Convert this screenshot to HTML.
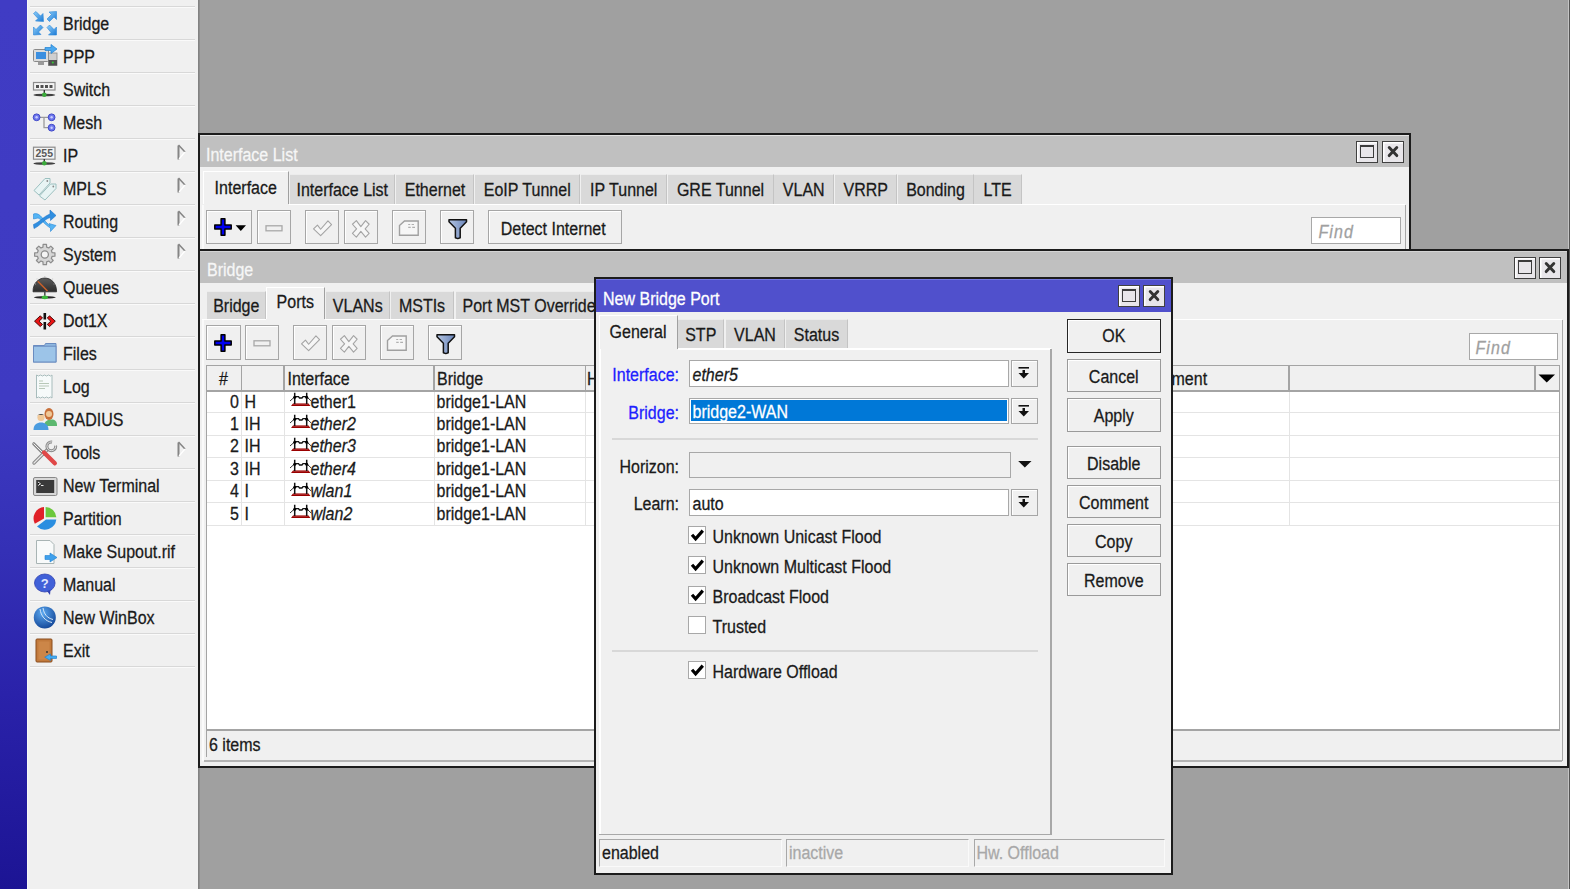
<!DOCTYPE html>
<html><head><meta charset="utf-8"><style>
*{box-sizing:border-box}
html,body{margin:0;padding:0}
body{width:1570px;height:889px;overflow:hidden;position:relative;background:#a0a0a0;font-family:"Liberation Sans",sans-serif;font-size:16px;color:#1a1a1a}
.a{position:absolute}
.t{position:absolute;white-space:nowrap;line-height:20px;height:20px;-webkit-text-stroke:0.25px currentColor;transform:scaleY(1.1);transform-origin:50% 42.5%}
#bar{left:0;top:0;width:27px;height:889px;background:linear-gradient(#403cc4,#3e3ac2 45%,#3430b6 62%,#2a22aa 78%,#1c1494)}
#menu{left:27px;top:0;width:171px;height:889px;background:#f0f0f0;border-left:1px solid #f8f8f8}
.sep{position:absolute;left:2px;width:165px;height:2px;border-top:1px solid #d8d8d8;border-bottom:1px solid #fafafa}
.win{position:absolute;background:#f0f0f0;border:2px solid #1c1c1c}
.ttext{color:#f6f6f6}
.btn{position:absolute;background:#f0f0f0;border:1.5px solid #a6a6a6;box-shadow:inset 1px 1px 0 #fff}
.wbtn{position:absolute;width:22px;height:22px;background:#e8e6ea;border:1.3px solid #404040;box-shadow:inset 1.5px 1.5px 0 #fff}

</style></head><body>
<div id="bar" class="a"></div>
<div id="menu" class="a">
<div class="sep" style="top:6px"></div>
<svg class="a" style="left:2px;top:6px" width="32" height="33" viewBox="0 0 32 33"><defs><linearGradient id="gb" x1="0" y1="0" x2="1" y2="1"><stop offset="0" stop-color="#8fd0fa"/><stop offset="1" stop-color="#1c7ad6"/></linearGradient></defs>
<g fill="url(#gb)" stroke="#2a86d8" stroke-width=".6">
<path d="M3.5 7.5 L6 5.5 L10.5 10 L13 7.5 L13.5 15.5 L5.5 15 L8 12.5 Z"/>
<path d="M26.5 5.5 L26.5 13.5 L24 11 L19.5 15.5 L17 13 L21.5 8.5 L19 6 Z"/>
<path d="M3.5 29 L3.5 21 L6 23.5 L10.5 19 L13 21.5 L8.5 26 L11 28.5 Z"/>
<path d="M17 21.5 L19.5 19 L24 23.5 L26.5 21 L26.5 29 L18.5 29 L21 26.5 Z"/>
</g></svg>
<div class="t mt" style="left:35px;top:14px">Bridge</div>
<div class="sep" style="top:39px"></div>
<svg class="a" style="left:2px;top:39px" width="32" height="33" viewBox="0 0 32 33"><rect x="3.5" y="10.5" width="15" height="12" rx="1" fill="#dcdcdc" stroke="#8a8a8a"/>
<rect x="6" y="13" width="10" height="7" fill="#3b8fe0"/>
<rect x="8" y="22.5" width="6" height="3.5" fill="#9a9a9a"/>
<rect x="18.5" y="14" width="8.5" height="12.5" fill="#cfcfcf" stroke="#8a8a8a" stroke-width=".8"/>
<rect x="18.5" y="21" width="8.5" height="5.5" fill="#505050"/>
<circle cx="22.8" cy="23.5" r="1" fill="#3c3"/>
<path d="M15 8.5 L21 8.5 L21 5.5 L27 10 L21 14.5 L21 11.5 L15 11.5 Z" fill="#4aa8f0" stroke="#1f7fd0" stroke-width=".7"/></svg>
<div class="t mt" style="left:35px;top:47px">PPP</div>
<div class="sep" style="top:72px"></div>
<svg class="a" style="left:2px;top:72px" width="32" height="33" viewBox="0 0 32 33"><rect x="3.5" y="10.5" width="21.5" height="7.5" fill="#f4f4f4" stroke="#8c8c8c" stroke-width="1.2"/>
<g fill="#505050"><rect x="6" y="13" width="3" height="3"/><rect x="10.5" y="13" width="3" height="3"/><rect x="15" y="13" width="3" height="3"/><rect x="19.5" y="13" width="3" height="3"/></g>
<rect x="13.6" y="18" width="1.4" height="4" fill="#333"/>
<ellipse cx="14.3" cy="23" rx="11" ry="1.3" fill="#404040"/>
<circle cx="14.3" cy="22.8" r="2.3" fill="#3aaa3a"/></svg>
<div class="t mt" style="left:35px;top:80px">Switch</div>
<div class="sep" style="top:105px"></div>
<svg class="a" style="left:2px;top:105px" width="32" height="33" viewBox="0 0 32 33"><path d="M6.5 12.3 H21.5 M14 12.3 V22.7 H21.5" stroke="#9a9a9a" stroke-width="1.3" fill="none"/>
<g fill="#6e78ec" stroke="#4048c8" stroke-width="1"><circle cx="6.6" cy="12.3" r="3.4"/><circle cx="21.6" cy="12.3" r="3.4"/><circle cx="21.6" cy="22.7" r="3.4"/></g>
<g fill="#c8ccff"><circle cx="6.6" cy="12.3" r="1.2"/><circle cx="21.6" cy="12.3" r="1.2"/><circle cx="21.6" cy="22.7" r="1.2"/></g></svg>
<div class="t mt" style="left:35px;top:113px">Mesh</div>
<div class="sep" style="top:138px"></div>
<svg class="a" style="left:2px;top:138px" width="32" height="33" viewBox="0 0 32 33"><rect x="3.5" y="9.2" width="21.5" height="12" fill="#f4f4f4" stroke="#8c8c8c" stroke-width="1.2"/>
<text x="14.3" y="19.3" font-family="Liberation Sans" font-size="10.5" font-weight="bold" fill="#5a5a5a" text-anchor="middle">255</text>
<rect x="13.6" y="21" width="1.4" height="3.5" fill="#333"/>
<ellipse cx="14.3" cy="25.5" rx="11" ry="1.3" fill="#404040"/>
<circle cx="14.3" cy="25.3" r="2.3" fill="#3aaa3a"/></svg>
<div class="t mt" style="left:35px;top:146px">IP</div>
<svg class="a" style="left:143px;top:138px" width="16" height="33" viewBox="0 0 16 33"><path d="M7.5 7.5 V21.5" stroke="#858585" stroke-width="2"/><path d="M7.5 7 L14 14" stroke="#858585" stroke-width="1.5"/><path d="M14 14 L8 21" stroke="#ffffff" stroke-width="1.2"/></svg>
<div class="sep" style="top:171px"></div>
<svg class="a" style="left:2px;top:171px" width="32" height="33" viewBox="0 0 32 33"><g fill="#e8f4f4" stroke="#9cc0c0" stroke-width="1">
<path d="M4 19.5 L15 7.5 L20 7.5 L20 12 L9 24 Z"/>
<path d="M9.5 25 L20.5 13 L26 13 L26 17.5 L15 29 Z"/></g>
<circle cx="17.3" cy="10" r=".9" fill="#888"/><circle cx="23.3" cy="15.5" r=".9" fill="#888"/></svg>
<div class="t mt" style="left:35px;top:179px">MPLS</div>
<svg class="a" style="left:143px;top:171px" width="16" height="33" viewBox="0 0 16 33"><path d="M7.5 7.5 V21.5" stroke="#858585" stroke-width="2"/><path d="M7.5 7 L14 14" stroke="#858585" stroke-width="1.5"/><path d="M14 14 L8 21" stroke="#ffffff" stroke-width="1.2"/></svg>
<div class="sep" style="top:204px"></div>
<svg class="a" style="left:2px;top:204px" width="32" height="33" viewBox="0 0 32 33"><path d="M3.5 10 C9 8 12 14 16 18 L20 22 L19 19.5 L26 21.5 L20.5 27.5 L20.5 24 C15 21 11 15 8 14 L3.5 15 Z" fill="#55b4f4" stroke="#2a88d8" stroke-width=".6"/>
<path d="M3.5 20.5 C10 18 14 12 20 10 L20 6 L26 11.5 L20.5 16.5 L20.5 13.5 C14 15 10 22 4 24.5 Z" fill="#2f8ee0" stroke="#1f74c8" stroke-width=".6"/></svg>
<div class="t mt" style="left:35px;top:212px">Routing</div>
<svg class="a" style="left:143px;top:204px" width="16" height="33" viewBox="0 0 16 33"><path d="M7.5 7.5 V21.5" stroke="#858585" stroke-width="2"/><path d="M7.5 7 L14 14" stroke="#858585" stroke-width="1.5"/><path d="M14 14 L8 21" stroke="#ffffff" stroke-width="1.2"/></svg>
<div class="sep" style="top:237px"></div>
<svg class="a" style="left:2px;top:237px" width="32" height="33" viewBox="0 0 32 33"><path d="M13.11 7.34 L16.49 7.34 L16.64 10.13 L18.71 10.98 L20.79 9.12 L23.18 11.51 L21.32 13.59 L22.17 15.66 L24.96 15.81 L24.96 19.19 L22.17 19.34 L21.32 21.41 L23.18 23.49 L20.79 25.88 L18.71 24.02 L16.64 24.87 L16.49 27.66 L13.11 27.66 L12.96 24.87 L10.89 24.02 L8.81 25.88 L6.42 23.49 L8.28 21.41 L7.43 19.34 L4.64 19.19 L4.64 15.81 L7.43 15.66 L8.28 13.59 L6.42 11.51 L8.81 9.12 L10.89 10.98 L12.96 10.13 Z" fill="#d6d6d6" stroke="#8c8c8c" stroke-width="1.2" stroke-linejoin="round"/>
<circle cx="14.8" cy="17.5" r="3.6" fill="#f4f4f4" stroke="#8c8c8c" stroke-width="1.3"/></svg>
<div class="t mt" style="left:35px;top:245px">System</div>
<svg class="a" style="left:143px;top:237px" width="16" height="33" viewBox="0 0 16 33"><path d="M7.5 7.5 V21.5" stroke="#858585" stroke-width="2"/><path d="M7.5 7 L14 14" stroke="#858585" stroke-width="1.5"/><path d="M14 14 L8 21" stroke="#ffffff" stroke-width="1.2"/></svg>
<div class="sep" style="top:270px"></div>
<svg class="a" style="left:2px;top:270px" width="32" height="33" viewBox="0 0 32 33"><defs><linearGradient id="gq" x1="0" y1="0" x2="0" y2="1"><stop offset="0" stop-color="#5c5c5c"/><stop offset="1" stop-color="#2e2e2e"/></linearGradient></defs>
<path d="M3 21.8 C3 3.5, 26.6 3.5, 26.6 21.8 Z" fill="url(#gq)" stroke="#2a2a2a" stroke-width=".8"/>
<path d="M7 8.5 V9.5 M14.8 6 V7 M22.6 8.5 V9.5 M5 14 H6 M23.6 14 H24.6" stroke="#bbb" stroke-width=".8"/>
<path d="M7.8 11.2 L17.5 21" stroke="#c8602a" stroke-width="1.5"/>
<rect x="14" y="21.8" width="1.6" height="4" fill="#555"/>
<ellipse cx="14.8" cy="27.3" rx="11" ry="1.2" fill="#2a2a2a"/>
<ellipse cx="14.8" cy="27.3" rx="3.2" ry="1.9" fill="#3ab83a"/></svg>
<div class="t mt" style="left:35px;top:278px">Queues</div>
<div class="sep" style="top:303px"></div>
<svg class="a" style="left:2px;top:303px" width="32" height="33" viewBox="0 0 32 33"><path d="M14.8 10 V16.5 M14.8 19 V26.5" stroke="#111" stroke-width="2.6"/>
<path d="M4.5 18.2 L10.3 12.8 L12.5 15 L9 18.2 L12.5 21.4 L10.3 23.6 Z" fill="#e81414" stroke="#3a0000" stroke-width=".9" stroke-linejoin="round"/>
<path d="M25.3 18.2 L19.5 12.8 L17.3 15 L20.8 18.2 L17.3 21.4 L19.5 23.6 Z" fill="#e81414" stroke="#3a0000" stroke-width=".9" stroke-linejoin="round"/></svg>
<div class="t mt" style="left:35px;top:311px">Dot1X</div>
<div class="sep" style="top:336px"></div>
<svg class="a" style="left:2px;top:336px" width="32" height="33" viewBox="0 0 32 33"><path d="M3.5 9.5 H14.5 L15.5 7.5 H26 V26 H3.5 Z" fill="#8fb8e0" stroke="#6a8cc0" stroke-width="1"/>
<rect x="3.5" y="10.2" width="22.5" height="15.8" fill="#9cc4e8" stroke="#6a8cc0" stroke-width="1"/></svg>
<div class="t mt" style="left:35px;top:344px">Files</div>
<div class="sep" style="top:369px"></div>
<svg class="a" style="left:2px;top:369px" width="32" height="33" viewBox="0 0 32 33"><path d="M6.5 6 L8.5 7 L10.5 6 L12.5 7 L14.5 6 L16.5 7 L18.5 6 L20.5 7 L22 6 V29 L20.5 28 L18.5 29 L16.5 28 L14.5 29 L12.5 28 L10.5 29 L8.5 28 L6.5 29 Z" fill="#f6fafa" stroke="#a8bcbc" stroke-width="1"/>
<path d="M9 12 H13 M9 14.5 H19 M9 17 H19 M9 19.5 H15" stroke="#b8c8b8" stroke-width="1"/></svg>
<div class="t mt" style="left:35px;top:377px">Log</div>
<div class="sep" style="top:402px"></div>
<svg class="a" style="left:2px;top:402px" width="32" height="33" viewBox="0 0 32 33"><path d="M14 24 C14 19 18 17.5 21.5 17.5 C25 17.5 27 19.5 27 23 L27 24 Z" fill="#5cb870"/>
<ellipse cx="19" cy="12" rx="4.5" ry="6" fill="#c8703a"/>
<circle cx="19" cy="12" r="3" fill="#f0c898"/>
<path d="M3.5 28 C3.5 22.5 7 20.5 11 20.5 C15 20.5 18.5 22.5 18.5 28 Z" fill="#4a9ce0"/>
<circle cx="11" cy="15.5" r="3.6" fill="#f0c898"/>
<path d="M7.2 14.5 C7.2 11 14.8 11 14.8 14.5 L14 13 L8 13 Z" fill="#4a4a4a"/></svg>
<div class="t mt" style="left:35px;top:410px">RADIUS</div>
<div class="sep" style="top:435px"></div>
<svg class="a" style="left:2px;top:435px" width="32" height="33" viewBox="0 0 32 33"><path d="M3.8 8.8 L14 19" stroke="#8a8a8a" stroke-width="3.2" stroke-linecap="round"/><path d="M3.8 8.8 L14 19" stroke="#f0f0f0" stroke-width="1" stroke-linecap="round"/>
<path d="M4 28 L17.5 14.5" stroke="#8a8a8a" stroke-width="3.4" stroke-linecap="round"/><path d="M4 28 L17.5 14.5" stroke="#e8e8e8" stroke-width="1.2" stroke-linecap="round"/>
<circle cx="21.3" cy="11.3" r="4.4" fill="none" stroke="#8a8a8a" stroke-width="3"/><circle cx="21.3" cy="11.3" r="4.4" fill="none" stroke="#e0e0e0" stroke-width="1"/><path d="M21.5 11 L22.5 4.5 L30 4.5 L30 10 Z" fill="#f0f0f0"/>
<path d="M14 17.5 L24.8 28.3" stroke="#e04848" stroke-width="4.4" stroke-linecap="round"/></svg>
<div class="t mt" style="left:35px;top:443px">Tools</div>
<svg class="a" style="left:143px;top:435px" width="16" height="33" viewBox="0 0 16 33"><path d="M7.5 7.5 V21.5" stroke="#858585" stroke-width="2"/><path d="M7.5 7 L14 14" stroke="#858585" stroke-width="1.5"/><path d="M14 14 L8 21" stroke="#ffffff" stroke-width="1.2"/></svg>
<div class="sep" style="top:468px"></div>
<svg class="a" style="left:2px;top:468px" width="32" height="33" viewBox="0 0 32 33"><rect x="3.5" y="9.5" width="23.5" height="18" rx="1.5" fill="#d8d8d8" stroke="#888" stroke-width="1"/>
<rect x="6.2" y="12" width="18" height="13" fill="#3a3a3a"/>
<path d="M8 14 L10.5 15.8 L8 17.5 M11 17.5 H13.5" stroke="#eee" stroke-width="1"/></svg>
<div class="t mt" style="left:35px;top:476px">New Terminal</div>
<div class="sep" style="top:501px"></div>
<svg class="a" style="left:2px;top:501px" width="32" height="33" viewBox="0 0 32 33"><path d="M14 17.5 L14 6 A11.5 11.5 0 0 0 4.8 22.7 Z" fill="#e02028"/>
<path d="M15.6 16.3 L15.6 6 A11 11 0 0 1 26.3 16.3 Z" fill="#6cc83c"/>
<path d="M26.3 18.5 A11.5 11.5 0 0 1 7 25.6 L16 18.5 Z" fill="#2a8ee0"/></svg>
<div class="t mt" style="left:35px;top:509px">Partition</div>
<div class="sep" style="top:534px"></div>
<svg class="a" style="left:2px;top:534px" width="32" height="33" viewBox="0 0 32 33"><path d="M6.5 6.5 H20 L24 10.5 V29.5 H6.5 Z" fill="#f8fafa" stroke="#a8b4b4" stroke-width="1"/>
<path d="M15 21.5 H20 V19 L27 23.5 L20 28 V25.5 H15 Z" fill="#3ea0ec" stroke="#1f7fd0" stroke-width=".6"/></svg>
<div class="t mt" style="left:35px;top:542px">Make Supout.rif</div>
<div class="sep" style="top:567px"></div>
<svg class="a" style="left:2px;top:567px" width="32" height="33" viewBox="0 0 32 33"><ellipse cx="14.8" cy="16" rx="10.3" ry="9" fill="#4060d8" stroke="#3040b0" stroke-width=".8"/>
<path d="M17 24 L20 28 L20.5 23 Z" fill="#3040b0"/>
<text x="14.8" y="21" font-family="Liberation Sans" font-size="13" font-weight="bold" fill="#e0e8ff" text-anchor="middle">?</text></svg>
<div class="t mt" style="left:35px;top:575px">Manual</div>
<div class="sep" style="top:600px"></div>
<svg class="a" style="left:2px;top:600px" width="32" height="33" viewBox="0 0 32 33"><defs><radialGradient id="gw" cx=".4" cy=".3" r=".8"><stop offset="0" stop-color="#5aa8f0"/><stop offset="1" stop-color="#0e3e90"/></radialGradient></defs>
<circle cx="14.8" cy="17.4" r="11" fill="url(#gw)"/>
<path d="M10 9 C11 16 15 21 22 22.5 M13 8 C14 14 17 18 23 19.5" stroke="#d8e8f8" stroke-width="1" fill="none"/></svg>
<div class="t mt" style="left:35px;top:608px">New WinBox</div>
<div class="sep" style="top:633px"></div>
<svg class="a" style="left:2px;top:633px" width="32" height="33" viewBox="0 0 32 33"><rect x="6" y="6" width="16" height="23" rx="1" fill="#c27a3c" stroke="#8a4c1c" stroke-width="1"/>
<rect x="8.5" y="8.5" width="11" height="18" fill="#cc8648"/>
<circle cx="17" cy="19" r="1" fill="#333"/>
<path d="M26.5 23 H20.5 V21 L14.7 24.2 L20.5 27.4 V25.4 H26.5 Z" fill="#48aef0" stroke="#1f7fd0" stroke-width=".7"/></svg>
<div class="t mt" style="left:35px;top:641px">Exit</div>
<div class="sep" style="top:666px"></div>
</div>
<div class="a" style="left:198px;top:0px;width:2px;height:889px;background:linear-gradient(90deg,#7c7c7c,#949494)"></div>
<div class="a" style="left:1568px;top:0px;width:1px;height:889px;background:#c4c4c4"></div>
<div class="a" style="left:1569px;top:0px;width:1px;height:889px;background:#555"></div>
<div class="win" style="left:198px;top:133px;width:1213px;height:118px"></div>
<div class="a" style="left:200px;top:135px;width:1209px;height:1px;background:#e4e4e4"></div>
<div class="a" style="left:200px;top:136px;width:1209px;height:31px;background:#c0c0c0"></div>
<div class="t ttext" style="left:206px;top:145px;">Interface List</div>
<div class="wbtn" style="left:1356px;top:141px"><div class="a" style="left:3px;top:2.8px;width:13.5px;height:13.5px;border:1.4px solid #3c3c3c;border-top-width:2.8px;background:#e8e6ea"></div></div>
<div class="wbtn" style="left:1382px;top:141px"><svg class="a" style="left:0;top:0" width="20" height="20" viewBox="0 0 20 20"><path d="M6.2 5.6 L13.8 13.6 M13.8 5.6 L6.2 13.6" stroke="#333" stroke-width="2.9" stroke-linecap="round"/></svg></div>
<div class="a" style="left:202.5px;top:170.5px;width:86.5px;height:33.5px;background:#f0f0f0;border-top:1.5px solid #fff;border-left:1.5px solid #fff;border-right:1.5px solid #a0a0a0"></div>
<div class="t " style="left:202.5px;width:86.5px;top:177.5px;text-align:center;">Interface</div>
<div class="a" style="left:289.5px;top:173.5px;width:105.5px;height:30.0px;background:#d9d9d9;border-top:1px solid #ececec;border-right:1px solid #c4c4c4"></div>
<div class="t " style="left:289.5px;width:105.5px;top:180px;text-align:center;">Interface List</div>
<div class="a" style="left:396px;top:173.5px;width:78px;height:30.0px;background:#d9d9d9;border-top:1px solid #ececec;border-right:1px solid #c4c4c4"></div>
<div class="t " style="left:396px;width:78px;top:180px;text-align:center;">Ethernet</div>
<div class="a" style="left:474.5px;top:173.5px;width:105.5px;height:30.0px;background:#d9d9d9;border-top:1px solid #ececec;border-right:1px solid #c4c4c4"></div>
<div class="t " style="left:474.5px;width:105.5px;top:180px;text-align:center;">EoIP Tunnel</div>
<div class="a" style="left:580.5px;top:173.5px;width:86.5px;height:30.0px;background:#d9d9d9;border-top:1px solid #ececec;border-right:1px solid #c4c4c4"></div>
<div class="t " style="left:580.5px;width:86.5px;top:180px;text-align:center;">IP Tunnel</div>
<div class="a" style="left:667.5px;top:173.5px;width:106.0px;height:30.0px;background:#d9d9d9;border-top:1px solid #ececec;border-right:1px solid #c4c4c4"></div>
<div class="t " style="left:667.5px;width:106.0px;top:180px;text-align:center;">GRE Tunnel</div>
<div class="a" style="left:773.5px;top:173.5px;width:60.5px;height:30.0px;background:#d9d9d9;border-top:1px solid #ececec;border-right:1px solid #c4c4c4"></div>
<div class="t " style="left:773.5px;width:60.5px;top:180px;text-align:center;">VLAN</div>
<div class="a" style="left:834.5px;top:173.5px;width:62.5px;height:30.0px;background:#d9d9d9;border-top:1px solid #ececec;border-right:1px solid #c4c4c4"></div>
<div class="t " style="left:834.5px;width:62.5px;top:180px;text-align:center;">VRRP</div>
<div class="a" style="left:897.5px;top:173.5px;width:76.0px;height:30.0px;background:#d9d9d9;border-top:1px solid #ececec;border-right:1px solid #c4c4c4"></div>
<div class="t " style="left:897.5px;width:76.0px;top:180px;text-align:center;">Bonding</div>
<div class="a" style="left:973.5px;top:173.5px;width:48.0px;height:30.0px;background:#d9d9d9;border-top:1px solid #ececec;border-right:1px solid #c4c4c4"></div>
<div class="t " style="left:973.5px;width:48.0px;top:180px;text-align:center;">LTE</div>
<div class="a" style="left:289px;top:203.5px;width:1116px;height:1.5px;background:#fff"></div>
<div class="a" style="left:1404.5px;top:205px;width:1.0px;height:44px;background:#a8a8a8"></div>
<div class="a" style="left:202px;top:205px;width:1.5px;height:44px;background:#fafafa"></div>
<div class="btn" style="left:206px;top:210px;width:46px;height:34px;"></div>
<div class="btn" style="left:256.5px;top:210px;width:34.5px;height:34px;"></div>
<div class="btn" style="left:304.5px;top:210px;width:34.5px;height:34px;"></div>
<div class="btn" style="left:343.5px;top:210px;width:34.5px;height:34px;"></div>
<div class="btn" style="left:391.5px;top:210px;width:34.5px;height:34px;"></div>
<div class="btn" style="left:439.5px;top:210px;width:34.5px;height:34px;"></div>
<svg class="a" style="left:205.8px;top:210.39999999999998px" width="34" height="34" viewBox="0 0 34 34"><path d="M15.1 8.8 H18.9 V15.1 H25.2 V18.9 H18.9 V25.2 H15.1 V18.9 H8.8 V15.1 H15.1 Z" fill="#0000f0" stroke="#000" stroke-width="1.5" stroke-linejoin="round"/></svg>
<svg class="a" style="left:232px;top:210.7px" width="16" height="34" viewBox="0 0 16 34"><path d="M3.6 14.2 H14 L8.8 20 Z" fill="#000"/></svg>
<svg class="a" style="left:256.75px;top:210.7px" width="34" height="34" viewBox="0 0 34 34"><rect x="9" y="14.8" width="16" height="5" fill="none" stroke="#a8a8a8" stroke-width="1.3"/></svg>
<svg class="a" style="left:304.75px;top:210.7px" width="34" height="34" viewBox="0 0 34 34"><path d="M8.55 17.95 L12.45 14.05 L15.65 18.25 L22.95 9.85 L26.55 13.55 L15.65 24.55 Z" fill="#f6f6f6" stroke="#a4a4a4" stroke-width="1.1" stroke-linejoin="round"/></svg>
<svg class="a" style="left:343.75px;top:210.7px" width="34" height="34" viewBox="0 0 34 34"><path d="M8.45 13.25 L12.35 9.65 L16.85 15.65 L21.55 9.65 L25.15 13.25 L21.15 17.95 L25.15 22.45 L21.55 26.05 L16.85 20.35 L12.35 26.05 L8.45 22.45 L12.6 17.95 Z" fill="#f6f6f6" stroke="#a4a4a4" stroke-width="1.1" stroke-linejoin="round"/></svg>
<svg class="a" style="left:391.75px;top:210.7px" width="34" height="34" viewBox="0 0 34 34"><path d="M7.5 14.5 L12.5 10 H26.2 V24.3 H7.5 Z" fill="#f6f6f6" stroke="#a0a0a0" stroke-width="1.4"/><path d="M16.2 13.5 H18.2 M19.6 13.5 H22 M16.2 16.4 H18.7 M20.2 16.4 H23" stroke="#b0b0b0" stroke-width="1.1"/></svg>
<svg class="a" style="left:439.75px;top:210.7px" width="34" height="34" viewBox="0 0 34 34"><defs><linearGradient id="fg439" x1="0" x2="1"><stop offset="0" stop-color="#b4c4e0"/><stop offset="1" stop-color="#6a86bc"/></linearGradient></defs><path d="M9 8.8 H26.5 V10.8 L20.2 17.2 V26.8 L17.8 27.6 L15.4 26.8 V17.2 L9 10.8 Z" fill="url(#fg439)" stroke="#111" stroke-width="1.5" stroke-linejoin="round"/></svg>
<div class="btn" style="left:487.5px;top:210px;width:134.5px;height:34px;"></div>
<div class="t " style="left:486px;width:134.5px;top:218.5px;text-align:center;">Detect Internet</div>
<div class="a" style="left:1311px;top:217px;width:90px;height:27px;background:#fff;border:1.5px solid #a8a8a8"></div>
<div class="t " style="left:1318.5px;top:221.5px;font-style:italic;color:#a0a0a0;letter-spacing:1.1px">Find</div>
<div class="win" style="left:198px;top:249px;width:1371px;height:519px"></div>
<div class="a" style="left:200px;top:251px;width:1367px;height:1px;background:#d4d4d4"></div>
<div class="a" style="left:200px;top:252px;width:1367px;height:31px;background:#c0c0c0"></div>
<div class="t ttext" style="left:207px;top:259.5px;">Bridge</div>
<div class="wbtn" style="left:1514px;top:256.5px"><div class="a" style="left:3px;top:2.8px;width:13.5px;height:13.5px;border:1.4px solid #3c3c3c;border-top-width:2.8px;background:#e8e6ea"></div></div>
<div class="wbtn" style="left:1539px;top:256.5px"><svg class="a" style="left:0;top:0" width="20" height="20" viewBox="0 0 20 20"><path d="M6.2 5.6 L13.8 13.6 M13.8 5.6 L6.2 13.6" stroke="#333" stroke-width="2.9" stroke-linecap="round"/></svg></div>
<div class="a" style="left:207px;top:290.5px;width:58.5px;height:28.0px;background:#d9d9d9;border-top:1px solid #ececec;border-right:1px solid #c4c4c4"></div>
<div class="t " style="left:207px;width:58.5px;top:296px;text-align:center;">Bridge</div>
<div class="a" style="left:265.5px;top:286.5px;width:59.5px;height:32.5px;background:#f0f0f0;border-top:1.5px solid #fff;border-left:1.5px solid #fff;border-right:1.5px solid #a0a0a0"></div>
<div class="t " style="left:265.5px;width:59.5px;top:292px;text-align:center;">Ports</div>
<div class="a" style="left:325.5px;top:290.5px;width:64.5px;height:28.0px;background:#d9d9d9;border-top:1px solid #ececec;border-right:1px solid #c4c4c4"></div>
<div class="t " style="left:325.5px;width:64.5px;top:296px;text-align:center;">VLANs</div>
<div class="a" style="left:390.5px;top:290.5px;width:63.0px;height:28.0px;background:#d9d9d9;border-top:1px solid #ececec;border-right:1px solid #c4c4c4"></div>
<div class="t " style="left:390.5px;width:63.0px;top:296px;text-align:center;">MSTIs</div>
<div class="a" style="left:455.5px;top:290.5px;width:160px;height:28px;background:#d9d9d9;border-top:1px solid #ececec"></div>
<div class="t " style="left:462.5px;top:296px;">Port MST Overrides</div>
<div class="a" style="left:325px;top:318.5px;width:1237px;height:1.5px;background:#fff"></div>
<div class="a" style="left:202px;top:319px;width:63.5px;height:1px;background:#fff"></div>
<div class="a" style="left:1561.5px;top:320px;width:1.0px;height:441px;background:#a8a8a8"></div>
<div class="a" style="left:202px;top:320px;width:1.5px;height:441px;background:#fafafa"></div>
<div class="btn" style="left:206px;top:325px;width:34.5px;height:34.5px;"></div>
<div class="btn" style="left:244.5px;top:325px;width:34.5px;height:34.5px;"></div>
<div class="btn" style="left:292.5px;top:325px;width:34.5px;height:34.5px;"></div>
<div class="btn" style="left:331.5px;top:325px;width:34.5px;height:34.5px;"></div>
<div class="btn" style="left:379.5px;top:325px;width:34.5px;height:34.5px;"></div>
<div class="btn" style="left:427.5px;top:325px;width:34.5px;height:34.5px;"></div>
<svg class="a" style="left:206.25px;top:325.95px" width="34" height="34" viewBox="0 0 34 34"><path d="M15.1 8.8 H18.9 V15.1 H25.2 V18.9 H18.9 V25.2 H15.1 V18.9 H8.8 V15.1 H15.1 Z" fill="#0000f0" stroke="#000" stroke-width="1.5" stroke-linejoin="round"/></svg>
<svg class="a" style="left:244.75px;top:325.95px" width="34" height="34" viewBox="0 0 34 34"><rect x="9" y="14.8" width="16" height="5" fill="none" stroke="#a8a8a8" stroke-width="1.3"/></svg>
<svg class="a" style="left:292.75px;top:325.95px" width="34" height="34" viewBox="0 0 34 34"><path d="M8.55 17.95 L12.45 14.05 L15.65 18.25 L22.95 9.85 L26.55 13.55 L15.65 24.55 Z" fill="#f6f6f6" stroke="#a4a4a4" stroke-width="1.1" stroke-linejoin="round"/></svg>
<svg class="a" style="left:331.75px;top:325.95px" width="34" height="34" viewBox="0 0 34 34"><path d="M8.45 13.25 L12.35 9.65 L16.85 15.65 L21.55 9.65 L25.15 13.25 L21.15 17.95 L25.15 22.45 L21.55 26.05 L16.85 20.35 L12.35 26.05 L8.45 22.45 L12.6 17.95 Z" fill="#f6f6f6" stroke="#a4a4a4" stroke-width="1.1" stroke-linejoin="round"/></svg>
<svg class="a" style="left:379.75px;top:325.95px" width="34" height="34" viewBox="0 0 34 34"><path d="M7.5 14.5 L12.5 10 H26.2 V24.3 H7.5 Z" fill="#f6f6f6" stroke="#a0a0a0" stroke-width="1.4"/><path d="M16.2 13.5 H18.2 M19.6 13.5 H22 M16.2 16.4 H18.7 M20.2 16.4 H23" stroke="#b0b0b0" stroke-width="1.1"/></svg>
<svg class="a" style="left:427.75px;top:325.95px" width="34" height="34" viewBox="0 0 34 34"><defs><linearGradient id="fg427" x1="0" x2="1"><stop offset="0" stop-color="#b4c4e0"/><stop offset="1" stop-color="#6a86bc"/></linearGradient></defs><path d="M9 8.8 H26.5 V10.8 L20.2 17.2 V26.8 L17.8 27.6 L15.4 26.8 V17.2 L9 10.8 Z" fill="url(#fg427)" stroke="#111" stroke-width="1.5" stroke-linejoin="round"/></svg>
<div class="a" style="left:1468.5px;top:332.5px;width:89.5px;height:27.5px;background:#fff;border:1.5px solid #a8a8a8"></div>
<div class="t " style="left:1475.5px;top:338px;font-style:italic;color:#a0a0a0;letter-spacing:1.1px">Find</div>
<div class="a" style="left:205.5px;top:364.5px;width:1354.5px;height:365.0px;background:#fff;border:1.5px solid #a4a4a4"></div>
<div class="a" style="left:207px;top:366px;width:1351.5px;height:24px;background:#f0f0f0"></div>
<div class="a" style="left:207px;top:390px;width:1351.5px;height:1.5px;background:#a4a4a4"></div>
<div class="a" style="left:240.75px;top:366px;width:1.5px;height:24px;background:#a4a4a4"></div>
<div class="a" style="left:283.25px;top:366px;width:1.5px;height:24px;background:#a4a4a4"></div>
<div class="a" style="left:433.25px;top:366px;width:1.5px;height:24px;background:#a4a4a4"></div>
<div class="a" style="left:584.75px;top:366px;width:1.5px;height:24px;background:#a4a4a4"></div>
<div class="a" style="left:1288.25px;top:366px;width:1.5px;height:24px;background:#a4a4a4"></div>
<div class="a" style="left:1534.25px;top:366px;width:1.5px;height:24px;background:#a4a4a4"></div>
<div class="a" style="left:241.0px;top:391.5px;width:1.0px;height:134.0px;background:#e4e4e4"></div>
<div class="a" style="left:283.5px;top:391.5px;width:1.0px;height:134.0px;background:#e4e4e4"></div>
<div class="a" style="left:433.5px;top:391.5px;width:1.0px;height:134.0px;background:#e4e4e4"></div>
<div class="a" style="left:585.0px;top:391.5px;width:1.0px;height:134.0px;background:#e4e4e4"></div>
<div class="a" style="left:1288.5px;top:391.5px;width:1.0px;height:134.0px;background:#e4e4e4"></div>
<div class="a" style="left:207px;top:412.3px;width:1351.5px;height:1.0px;background:#e4e4e4"></div>
<div class="a" style="left:207px;top:434.75px;width:1351.5px;height:1.0px;background:#e4e4e4"></div>
<div class="a" style="left:207px;top:457.2px;width:1351.5px;height:1.0px;background:#e4e4e4"></div>
<div class="a" style="left:207px;top:479.65px;width:1351.5px;height:1.0px;background:#e4e4e4"></div>
<div class="a" style="left:207px;top:502.1px;width:1351.5px;height:1.0px;background:#e4e4e4"></div>
<div class="a" style="left:207px;top:524.55px;width:1351.5px;height:1.0px;background:#e4e4e4"></div>
<svg class="a" style="left:1537px;top:371px" width="20" height="14" viewBox="0 0 20 14"><path d="M1.5 3.5 H18 L9.75 11.5 Z" fill="#000"/></svg>
<div class="t " style="left:219px;top:369px;">#</div>
<div class="t " style="left:287.5px;top:369px;">Interface</div>
<div class="t " style="left:437px;top:369px;">Bridge</div>
<div class="t " style="left:587px;top:369px;">H</div>
<div class="t " style="left:1171.5px;top:369px;">ment</div>
<div class="t" style="left:210px;width:29px;top:391.5px;text-align:right">0</div>
<div class="t " style="left:244.5px;top:391.5px;">H</div>
<svg class="a" style="left:289px;top:392.0px" width="24" height="16" viewBox="0 0 24 16"><path d="M2 14 L4 11.6 H19.5 L21.5 14 Z" fill="#9a0000"/><path d="M4 12.3 H19.5" stroke="#b03030" stroke-width="1"/><path d="M5.7 0.8 V12 M17.7 0.8 V12" stroke="#111" stroke-width="1.5"/><path d="M5.7 4.6 H9.5 L10.5 6 H13 L14 4.6 H17.7" stroke="#111" stroke-width="1.3" fill="none"/><path d="M5.7 4.8 L1 9 M17.7 4.8 L22.2 9" stroke="#333" stroke-width="1" fill="none"/><circle cx="5.7" cy="5.2" r="1.5" fill="#000"/><circle cx="17.7" cy="5.2" r="1.5" fill="#000"/></svg>
<div class="t " style="left:310.5px;top:391.5px;">ether1</div>
<div class="t " style="left:436.5px;top:391.5px;">bridge1-LAN</div>
<div class="t" style="left:210px;width:29px;top:413.95px;text-align:right">1</div>
<div class="t " style="left:244.5px;top:413.95px;">IH</div>
<svg class="a" style="left:289px;top:414.45px" width="24" height="16" viewBox="0 0 24 16"><path d="M2 14 L4 11.6 H19.5 L21.5 14 Z" fill="#9a0000"/><path d="M4 12.3 H19.5" stroke="#b03030" stroke-width="1"/><path d="M5.7 0.8 V12 M17.7 0.8 V12" stroke="#111" stroke-width="1.5"/><path d="M5.7 4.6 H9.5 L10.5 6 H13 L14 4.6 H17.7" stroke="#111" stroke-width="1.3" fill="none"/><path d="M5.7 4.8 L1 9 M17.7 4.8 L22.2 9" stroke="#333" stroke-width="1" fill="none"/><circle cx="5.7" cy="5.2" r="1.5" fill="#000"/><circle cx="17.7" cy="5.2" r="1.5" fill="#000"/></svg>
<div class="t " style="left:310.5px;top:413.95px;font-style:italic">ether2</div>
<div class="t " style="left:436.5px;top:413.95px;">bridge1-LAN</div>
<div class="t" style="left:210px;width:29px;top:436.4px;text-align:right">2</div>
<div class="t " style="left:244.5px;top:436.4px;">IH</div>
<svg class="a" style="left:289px;top:436.9px" width="24" height="16" viewBox="0 0 24 16"><path d="M2 14 L4 11.6 H19.5 L21.5 14 Z" fill="#9a0000"/><path d="M4 12.3 H19.5" stroke="#b03030" stroke-width="1"/><path d="M5.7 0.8 V12 M17.7 0.8 V12" stroke="#111" stroke-width="1.5"/><path d="M5.7 4.6 H9.5 L10.5 6 H13 L14 4.6 H17.7" stroke="#111" stroke-width="1.3" fill="none"/><path d="M5.7 4.8 L1 9 M17.7 4.8 L22.2 9" stroke="#333" stroke-width="1" fill="none"/><circle cx="5.7" cy="5.2" r="1.5" fill="#000"/><circle cx="17.7" cy="5.2" r="1.5" fill="#000"/></svg>
<div class="t " style="left:310.5px;top:436.4px;font-style:italic">ether3</div>
<div class="t " style="left:436.5px;top:436.4px;">bridge1-LAN</div>
<div class="t" style="left:210px;width:29px;top:458.85px;text-align:right">3</div>
<div class="t " style="left:244.5px;top:458.85px;">IH</div>
<svg class="a" style="left:289px;top:459.35px" width="24" height="16" viewBox="0 0 24 16"><path d="M2 14 L4 11.6 H19.5 L21.5 14 Z" fill="#9a0000"/><path d="M4 12.3 H19.5" stroke="#b03030" stroke-width="1"/><path d="M5.7 0.8 V12 M17.7 0.8 V12" stroke="#111" stroke-width="1.5"/><path d="M5.7 4.6 H9.5 L10.5 6 H13 L14 4.6 H17.7" stroke="#111" stroke-width="1.3" fill="none"/><path d="M5.7 4.8 L1 9 M17.7 4.8 L22.2 9" stroke="#333" stroke-width="1" fill="none"/><circle cx="5.7" cy="5.2" r="1.5" fill="#000"/><circle cx="17.7" cy="5.2" r="1.5" fill="#000"/></svg>
<div class="t " style="left:310.5px;top:458.85px;font-style:italic">ether4</div>
<div class="t " style="left:436.5px;top:458.85px;">bridge1-LAN</div>
<div class="t" style="left:210px;width:29px;top:481.3px;text-align:right">4</div>
<div class="t " style="left:244.5px;top:481.3px;">I</div>
<svg class="a" style="left:289px;top:481.8px" width="24" height="16" viewBox="0 0 24 16"><path d="M2 14 L4 11.6 H19.5 L21.5 14 Z" fill="#9a0000"/><path d="M4 12.3 H19.5" stroke="#b03030" stroke-width="1"/><path d="M5.7 0.8 V12 M17.7 0.8 V12" stroke="#111" stroke-width="1.5"/><path d="M5.7 4.6 H9.5 L10.5 6 H13 L14 4.6 H17.7" stroke="#111" stroke-width="1.3" fill="none"/><path d="M5.7 4.8 L1 9 M17.7 4.8 L22.2 9" stroke="#333" stroke-width="1" fill="none"/><circle cx="5.7" cy="5.2" r="1.5" fill="#000"/><circle cx="17.7" cy="5.2" r="1.5" fill="#000"/></svg>
<div class="t " style="left:310.5px;top:481.3px;font-style:italic">wlan1</div>
<div class="t " style="left:436.5px;top:481.3px;">bridge1-LAN</div>
<div class="t" style="left:210px;width:29px;top:503.75px;text-align:right">5</div>
<div class="t " style="left:244.5px;top:503.75px;">I</div>
<svg class="a" style="left:289px;top:504.25px" width="24" height="16" viewBox="0 0 24 16"><path d="M2 14 L4 11.6 H19.5 L21.5 14 Z" fill="#9a0000"/><path d="M4 12.3 H19.5" stroke="#b03030" stroke-width="1"/><path d="M5.7 0.8 V12 M17.7 0.8 V12" stroke="#111" stroke-width="1.5"/><path d="M5.7 4.6 H9.5 L10.5 6 H13 L14 4.6 H17.7" stroke="#111" stroke-width="1.3" fill="none"/><path d="M5.7 4.8 L1 9 M17.7 4.8 L22.2 9" stroke="#333" stroke-width="1" fill="none"/><circle cx="5.7" cy="5.2" r="1.5" fill="#000"/><circle cx="17.7" cy="5.2" r="1.5" fill="#000"/></svg>
<div class="t " style="left:310.5px;top:503.75px;font-style:italic">wlan2</div>
<div class="t " style="left:436.5px;top:503.75px;">bridge1-LAN</div>
<div class="a" style="left:206px;top:729.5px;width:1354px;height:1.5px;background:#a4a4a4"></div>
<div class="a" style="left:205.5px;top:731px;width:1.5px;height:26px;background:#a4a4a4"></div>
<div class="t " style="left:209px;top:735px;">6 items</div>
<div class="a" style="left:204px;top:760px;width:1358px;height:2px;background:#b4b4b4"></div>
<div class="win" style="left:594px;top:277px;width:579px;height:598px"></div>
<div class="a" style="left:596px;top:279px;width:575px;height:1px;background:#7478e0"></div>
<div class="a" style="left:596px;top:280px;width:575px;height:31.5px;background:#5050cc"></div>
<div class="t ttext" style="left:603px;top:289px;color:#fff">New Bridge Port</div>
<div class="wbtn" style="left:1118px;top:285px"><div class="a" style="left:3px;top:2.8px;width:13.5px;height:13.5px;border:1.4px solid #3c3c3c;border-top-width:2.8px;background:#e8e6ea"></div></div>
<div class="wbtn" style="left:1143px;top:285px"><svg class="a" style="left:0;top:0" width="20" height="20" viewBox="0 0 20 20"><path d="M6.2 5.6 L13.8 13.6 M13.8 5.6 L6.2 13.6" stroke="#333" stroke-width="2.9" stroke-linecap="round"/></svg></div>
<div class="a" style="left:598.5px;top:315px;width:79.0px;height:33.5px;background:#f0f0f0;border-top:1.5px solid #fff;border-left:1.5px solid #fff;border-right:1.5px solid #a0a0a0"></div>
<div class="t " style="left:598.5px;width:79.0px;top:321.5px;text-align:center;">General</div>
<div class="a" style="left:677.5px;top:319px;width:46.5px;height:29px;background:#d9d9d9;border-top:1px solid #ececec;border-right:1px solid #c4c4c4"></div>
<div class="t " style="left:677.5px;width:46.5px;top:325px;text-align:center;">STP</div>
<div class="a" style="left:725.5px;top:319px;width:59.0px;height:29px;background:#d9d9d9;border-top:1px solid #ececec;border-right:1px solid #c4c4c4"></div>
<div class="t " style="left:725.5px;width:59.0px;top:325px;text-align:center;">VLAN</div>
<div class="a" style="left:785.5px;top:319px;width:62.0px;height:29px;background:#d9d9d9;border-top:1px solid #ececec;border-right:1px solid #c4c4c4"></div>
<div class="t " style="left:785.5px;width:62.0px;top:325px;text-align:center;">Status</div>
<div class="a" style="left:677.5px;top:348px;width:373.5px;height:1.5px;background:#fff"></div>
<div class="a" style="left:599px;top:349px;width:1.5px;height:486px;background:#fff"></div>
<div class="a" style="left:1050px;top:349px;width:1.5px;height:486px;background:#a8a8a8"></div>
<div class="a" style="left:599px;top:833.5px;width:452.5px;height:1.5px;background:#a8a8a8"></div>
<div class="t" style="left:600px;width:79px;top:365.25px;text-align:right;color:#2020ff">Interface:</div>
<div class="a" style="left:688.5px;top:360px;width:320.5px;height:26.5px;background:#fff;border:1.5px solid #a8a8a8"></div>
<div class="t " style="left:692.5px;top:364.75px;font-style:italic">ether5</div>
<div class="btn" style="left:1011px;top:360px;width:27px;height:26.5px;border-width:1.5px"></div>
<svg class="a" style="left:1011px;top:360px" width="27" height="26" viewBox="0 0 27 26"><path d="M7.5 7.8 H18" stroke="#111" stroke-width="1.6"/><path d="M11.5 10 H14 V13 H18 L12.75 18.5 L7.5 13 H11.5 Z" fill="#111"/></svg>
<div class="t" style="left:600px;width:79px;top:402.5px;text-align:right;color:#2020ff">Bridge:</div>
<div class="a" style="left:688.5px;top:397.5px;width:320.5px;height:26.0px;background:#fff;border:1.5px solid #a8a8a8"></div>
<div class="a" style="left:691px;top:400.0px;width:315.5px;height:21.0px;background:#0078d7"></div>
<div class="t " style="left:692.5px;top:402.0px;color:#fff">bridge2-WAN</div>
<div class="btn" style="left:1011px;top:397.5px;width:27px;height:26.0px;border-width:1.5px"></div>
<svg class="a" style="left:1011px;top:397.5px" width="27" height="26" viewBox="0 0 27 26"><path d="M7.5 7.8 H18" stroke="#111" stroke-width="1.6"/><path d="M11.5 10 H14 V13 H18 L12.75 18.5 L7.5 13 H11.5 Z" fill="#111"/></svg>
<div class="a" style="left:612px;top:438px;width:426px;height:1.5px;background:#d8d8d8"></div>
<div class="t" style="left:600px;width:79px;top:456.75px;text-align:right;color:#1a1a1a">Horizon:</div>
<div class="a" style="left:688.5px;top:451.5px;width:322.0px;height:26.5px;background:#f0f0f0;border:1.5px solid #a8a8a8"></div>
<svg class="a" style="left:1011px;top:451.5px" width="27" height="26" viewBox="0 0 27 26"><path d="M7.2 9 H20.5 L13.85 15.5 Z" fill="#111"/></svg>
<div class="t" style="left:600px;width:79px;top:494.25px;text-align:right;color:#1a1a1a">Learn:</div>
<div class="a" style="left:688.5px;top:489px;width:320.5px;height:26.5px;background:#fff;border:1.5px solid #a8a8a8"></div>
<div class="t " style="left:692.5px;top:493.75px;">auto</div>
<div class="btn" style="left:1011px;top:489px;width:27px;height:26.5px;border-width:1.5px"></div>
<svg class="a" style="left:1011px;top:489px" width="27" height="26" viewBox="0 0 27 26"><path d="M7.5 7.8 H18" stroke="#111" stroke-width="1.6"/><path d="M11.5 10 H14 V13 H18 L12.75 18.5 L7.5 13 H11.5 Z" fill="#111"/></svg>
<div class="a" style="left:688px;top:525.5px;width:18px;height:18.0px;background:#fff;border:1.3px solid #a8a8a8"></div>
<svg class="a" style="left:688px;top:525.5px" width="18" height="18" viewBox="0 0 18 18"><path d="M4 8.8 L7.6 12.8 L14.8 4.6" stroke="#000" stroke-width="3.2" fill="none" stroke-linejoin="miter"/></svg>
<div class="t " style="left:712.5px;top:527.0px;">Unknown Unicast Flood</div>
<div class="a" style="left:688px;top:555.5px;width:18px;height:18.0px;background:#fff;border:1.3px solid #a8a8a8"></div>
<svg class="a" style="left:688px;top:555.5px" width="18" height="18" viewBox="0 0 18 18"><path d="M4 8.8 L7.6 12.8 L14.8 4.6" stroke="#000" stroke-width="3.2" fill="none" stroke-linejoin="miter"/></svg>
<div class="t " style="left:712.5px;top:557.0px;">Unknown Multicast Flood</div>
<div class="a" style="left:688px;top:585.5px;width:18px;height:18.0px;background:#fff;border:1.3px solid #a8a8a8"></div>
<svg class="a" style="left:688px;top:585.5px" width="18" height="18" viewBox="0 0 18 18"><path d="M4 8.8 L7.6 12.8 L14.8 4.6" stroke="#000" stroke-width="3.2" fill="none" stroke-linejoin="miter"/></svg>
<div class="t " style="left:712.5px;top:587.0px;">Broadcast Flood</div>
<div class="a" style="left:688px;top:615.5px;width:18px;height:18.0px;background:#fff;border:1.3px solid #a8a8a8"></div>
<div class="t " style="left:712.5px;top:617.0px;">Trusted</div>
<div class="a" style="left:612px;top:650px;width:426px;height:1.5px;background:#d8d8d8"></div>
<div class="a" style="left:688px;top:660.5px;width:18px;height:18.0px;background:#fff;border:1.3px solid #a8a8a8"></div>
<svg class="a" style="left:688px;top:660.5px" width="18" height="18" viewBox="0 0 18 18"><path d="M4 8.8 L7.6 12.8 L14.8 4.6" stroke="#000" stroke-width="3.2" fill="none" stroke-linejoin="miter"/></svg>
<div class="t " style="left:712.5px;top:662.0px;">Hardware Offload</div>
<div class="btn" style="left:1066.5px;top:319px;width:94.5px;height:34px;border-color:#262626"></div>
<div class="t " style="left:1066.5px;width:94.5px;top:326px;text-align:center;">OK</div>
<div class="btn" style="left:1066.5px;top:358.5px;width:94.5px;height:33.5px;border-color:#9a9a9a"></div>
<div class="t " style="left:1066.5px;width:94.5px;top:366.75px;text-align:center;">Cancel</div>
<div class="btn" style="left:1066.5px;top:397.5px;width:94.5px;height:34.0px;border-color:#9a9a9a"></div>
<div class="t " style="left:1066.5px;width:94.5px;top:406.0px;text-align:center;">Apply</div>
<div class="btn" style="left:1066.5px;top:445.5px;width:94.5px;height:33.5px;border-color:#9a9a9a"></div>
<div class="t " style="left:1066.5px;width:94.5px;top:453.75px;text-align:center;">Disable</div>
<div class="btn" style="left:1066.5px;top:485px;width:94.5px;height:33px;border-color:#9a9a9a"></div>
<div class="t " style="left:1066.5px;width:94.5px;top:493.0px;text-align:center;">Comment</div>
<div class="btn" style="left:1066.5px;top:523.5px;width:94.5px;height:33.5px;border-color:#9a9a9a"></div>
<div class="t " style="left:1066.5px;width:94.5px;top:531.75px;text-align:center;">Copy</div>
<div class="btn" style="left:1066.5px;top:562.5px;width:94.5px;height:33.5px;border-color:#9a9a9a"></div>
<div class="t " style="left:1066.5px;width:94.5px;top:570.75px;text-align:center;">Remove</div>
<div class="a" style="left:599px;top:838.5px;width:183px;height:28.0px;border-top:1.5px solid #a8a8a8;border-left:1.5px solid #a8a8a8;border-bottom:1px solid #fafafa;border-right:1px solid #fafafa"></div>
<div class="t " style="left:602px;top:842.5px;color:#1a1a1a">enabled</div>
<div class="a" style="left:786px;top:838.5px;width:183px;height:28.0px;border-top:1.5px solid #a8a8a8;border-left:1.5px solid #a8a8a8;border-bottom:1px solid #fafafa;border-right:1px solid #fafafa"></div>
<div class="t " style="left:789px;top:842.5px;color:#a8a8a8">inactive</div>
<div class="a" style="left:973.5px;top:838.5px;width:191.0px;height:28.0px;border-top:1.5px solid #a8a8a8;border-left:1.5px solid #a8a8a8;border-bottom:1px solid #fafafa;border-right:1px solid #fafafa"></div>
<div class="t " style="left:976.5px;top:842.5px;color:#a8a8a8">Hw. Offload</div>
</body></html>
